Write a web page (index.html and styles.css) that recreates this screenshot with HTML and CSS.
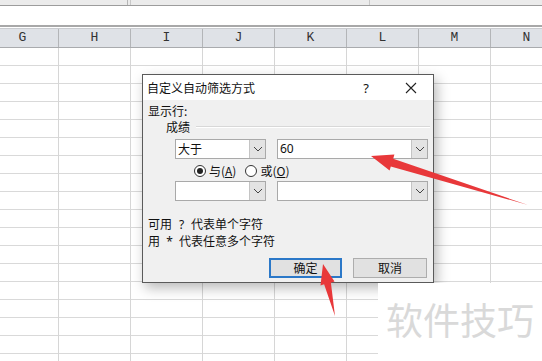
FILE: index.html
```html
<!DOCTYPE html>
<html lang="zh">
<head>
<meta charset="utf-8">
<title>自定义自动筛选方式</title>
<link rel="stylesheet" href="styles.css">
</head>
<body>
<div class="page">
  <div class="topbar">
    <span class="seg seg-a"></span><span class="seg seg-b"></span><span class="seg seg-c"></span>
  </div>
  <div class="formula"></div>
  <div class="colhead">
    <div class="col">G</div><div class="col">H</div><div class="col">I</div><div class="col">J</div>
    <div class="col">K</div><div class="col">L</div><div class="col">M</div><div class="col">N</div>
  </div>
  <div class="sheet"></div>

  <div class="dialog">
    <div class="titlebar">
      <span class="title">自定义自动筛选方式</span>
      <span class="help">?</span>
      <span class="close"><svg width="12" height="12" viewBox="0 0 12 12"><path d="M1 1 L11 11 M11 1 L1 11" stroke="#222" stroke-width="1.1" fill="none"/></svg></span>
    </div>
    <div class="dbody">
      <div class="show-label">显示行:</div>
      <div class="field-row"><span>成绩</span><span class="etch"></span></div>
      <div class="combo-row">
        <div class="combo combo-op"><span class="val">大于</span><span class="drop"><svg width="10" height="6" viewBox="0 0 10 6"><path d="M1 1 L5 5 L9 1" stroke="#444" fill="none"/></svg></span></div>
        <div class="combo combo-val"><span class="val num">60</span><span class="drop"><svg width="10" height="6" viewBox="0 0 10 6"><path d="M1 1 L5 5 L9 1" stroke="#444" fill="none"/></svg></span></div>
      </div>
      <div class="radio-row">
        <span class="radio checked"></span><span class="rlabel">与(<u>A</u>)</span>
        <span class="radio"></span><span class="rlabel">或(<u>O</u>)</span>
      </div>
      <div class="combo-row">
        <div class="combo combo-op"><span class="val"></span><span class="drop"><svg width="10" height="6" viewBox="0 0 10 6"><path d="M1 1 L5 5 L9 1" stroke="#444" fill="none"/></svg></span></div>
        <div class="combo combo-val"><span class="val"></span><span class="drop"><svg width="10" height="6" viewBox="0 0 10 6"><path d="M1 1 L5 5 L9 1" stroke="#444" fill="none"/></svg></span></div>
      </div>
      <div class="hint">
        <div>可用<span class="sym">?</span>代表单个字符</div>
        <div>用<span class="sym">*</span>代表任意多个字符</div>
      </div>
      <div class="buttons">
        <button class="btn default">确定</button>
        <button class="btn">取消</button>
      </div>
    </div>
  </div>

  <div class="watermark">软件技巧</div>

  <svg class="arrows" width="542" height="361" viewBox="0 0 542 361">
    <polygon fill="#e8383a" points="371,156 394.4,154.5 393.2,158.8 528,205 390.8,166.4 389.6,170.5"/>
    <polygon fill="#e8383a" points="323,264 334.5,281.5 330.9,282.7 335,316 324.1,284.3 320.5,285.5"/>
  </svg>
</div>
</body>
</html>
```

FILE: styles.css
```css
* { box-sizing: border-box; }
html, body { margin: 0; padding: 0; }
body {
  width: 542px;
  height: 361px;
  overflow: hidden;
  background: #fff;
  font-family: "Noto Sans CJK SC", "Noto Sans", sans-serif;
}
.page {
  position: relative;
  width: 542px;
  height: 361px;
  overflow: hidden;
}
.topbar {
  height: 6px;
  background: #ebebeb;
  border-bottom: 1px solid #9c9c9c;
  position: relative;
  display: flex;
}
.seg { display: block; height: 5px; }
.seg-a { width: 128px; border-right: 1px solid #b5b5b5; }
.seg-b { width: 3px; border-right: 1px solid #c8c8c8; }
.seg-c { width: 239px; border-right: 1px solid #c8c8c8; }
.formula {
  height: 21px;
  background: #fff;
  border-bottom: 2px solid #a8a8a8;
}
.colhead {
  margin-top: 1px;
  height: 20px;
  display: flex;
  margin-left: -13px;
  background: #dfe2e7;
  border-top: 1px solid #c9cbcf;
  border-bottom: 1px solid #a9abae;
}
.col {
  flex: 0 0 72px;
  width: 72px;
  border-right: 1px solid #b3b5b8;
  text-align: center;
  font-family: "Liberation Mono", "DejaVu Sans Mono", monospace;
  font-size: 13px;
  line-height: 18px;
  color: #333;
}
.sheet {
  height: 320px;
  background-color: #fff;
  background-image:
    linear-gradient(to right, transparent 71px, #d6d6d6 71px, #d6d6d6 72px),
    linear-gradient(to bottom, transparent 17px, #d9d9d9 17px, #d9d9d9 18px);
  background-size: 72px 18px, 72px 18px;
  background-position: -13px 0, 0 0;
}

/* dialog window */
.dialog {
  position: absolute;
  left: 142px;
  top: 74px;
  width: 292px;
  height: 209px;
  background: #f0f0f0;
  border: 1px solid #5a5a5a;
  box-shadow: 3px 5px 12px rgba(0,0,0,0.28);
  font-size: 12px;
  color: #111;
}
.titlebar {
  height: 25px;
  background: #fff;
  display: flex;
  align-items: center;
  padding-left: 4px;
}
.title { font-size: 12px; line-height: 14px; flex: 1; }
.help {
  width: 14px;
  text-align: center;
  font-size: 13px;
  margin-right: 32px;
  font-family: "Noto Sans", sans-serif;
}
.close {
  width: 12px;
  height: 12px;
  margin-right: 16px;
  display: flex;
}
.show-label {
  margin-top: 4px;
  height: 14px;
  line-height: 14px;
  padding-left: 5px;
}
.field-row {
  margin-top: 2px;
  height: 14px;
  line-height: 14px;
  padding-left: 23px;
  display: flex;
  align-items: center;
}
.etch {
  flex: 1;
  height: 2px;
  border-top: 1px solid #d8d8d8;
  border-bottom: 1px solid #ffffff;
  margin-left: 6px;
  margin-right: 3px;
}
.combo-row {
  margin-top: 5px;
  padding-left: 32px;
  display: flex;
  gap: 11px;
  height: 20px;
}
.radio-row + .combo-row { margin-top: 3px; }
.combo {
  height: 20px;
  background: #fff;
  border: 1px solid #a9a9a9;
  display: flex;
  align-items: stretch;
}
.combo-op { width: 91px; }
.combo-val { width: 151px; }
.val {
  flex: 1;
  padding-left: 2px;
  line-height: 18px;
  font-size: 12px;
}
.num { font-family: "Noto Sans", sans-serif; }
.drop {
  width: 16px;
  background: #e3e3e3;
  border-left: 1px solid #c4c4c4;
  display: flex;
  align-items: center;
  justify-content: center;
}
.radio-row {
  margin-top: 4px;
  height: 15px;
  padding-left: 51px;
  display: flex;
  align-items: center;
}
.radio {
  width: 12px;
  height: 12px;
  border: 1px solid #333;
  border-radius: 50%;
  background: #fff;
  position: relative;
  margin-right: 3px;
}
.radio.checked::after {
  content: "";
  position: absolute;
  left: 2px;
  top: 2px;
  width: 6px;
  height: 6px;
  border-radius: 50%;
  background: #222;
}
.rlabel { margin-right: 9px; line-height: 15px; }
.rlabel u { text-decoration: underline; text-underline-offset: 1px; }
.hint {
  margin-top: 15px;
  padding-left: 5px;
  line-height: 16px;
}
.sym {
  display: inline-block;
  width: 19px;
  text-align: center;
  font-family: "Noto Sans", sans-serif;
}
.buttons {
  margin-top: 8px;
  display: flex;
  justify-content: flex-end;
  gap: 11px;
  padding-right: 6px;
}
.btn {
  width: 74px;
  height: 20px;
  background: #e1e1e1;
  border: 1px solid #adadad;
  font-family: "Noto Sans CJK SC", sans-serif;
  font-size: 12px;
  line-height: 16px;
  padding: 0;
  color: #111;
}
.btn.default { width: 73px; border: 2px solid #2b78c8; }

.watermark {
  position: absolute;
  left: 378px;
  top: 283px;
  width: 164px;
  height: 78px;
  background: #fff;
  color: #d9d9d9;
  font-size: 37px;
  line-height: 37px;
  padding-top: 18px;
  padding-left: 8px;
  white-space: nowrap;
}
.arrows {
  position: absolute;
  left: 0;
  top: 0;
  pointer-events: none;
}
```
